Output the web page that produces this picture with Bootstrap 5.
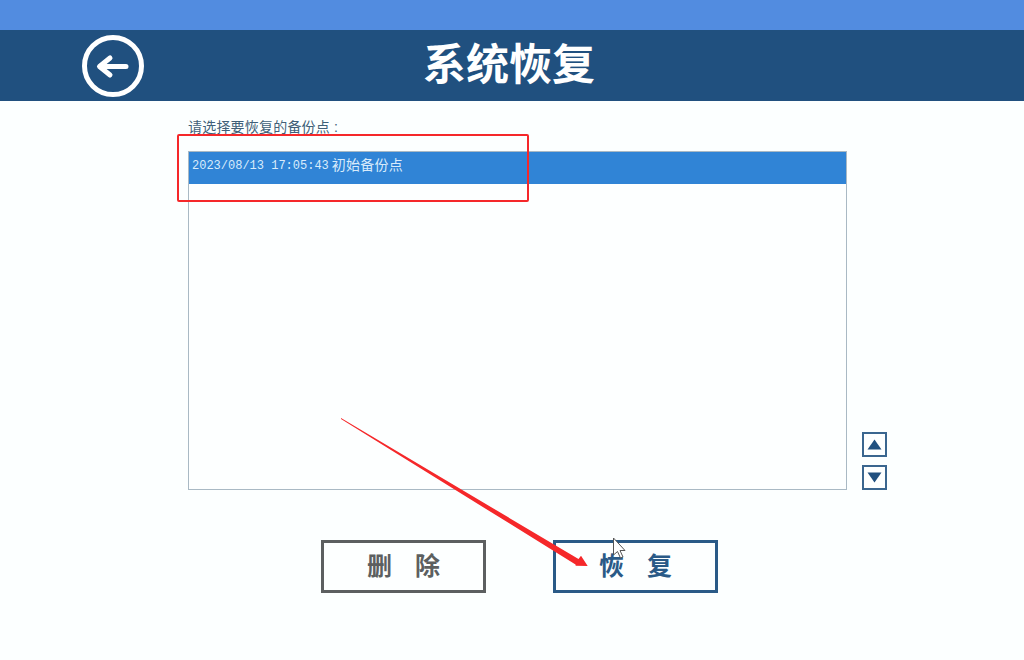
<!DOCTYPE html>
<html lang="zh-CN">

<head>
  <meta charset="UTF-8" />
  <meta name="viewport" content="width=device-width, initial-scale=1.0" />
  <title>系统恢复</title>
  <link href="https://cdn.jsdelivr.net/npm/bootstrap@5.3.0/dist/css/bootstrap.min.css" rel="stylesheet" />
  <script src="https://cdn.jsdelivr.net/npm/bootstrap@5.3.0/dist/js/bootstrap.bundle.min.js"></script>
  <style>
    body {
      background: #fcffff;
      height: 660px;
      overflow: hidden;
      position: relative;
      font-family: "Liberation Sans", "Noto Sans CJK SC", sans-serif;
    }

    .top-strip {
      height: 30px;
      background: #528ce0;
    }

    .title-bar {
      height: 71px;
      background: #20507f;
      padding-left: 82px;
    }

    .back-btn {
      width: 62px;
      height: 62px;
      padding: 0;
      border: 0;
      background: none;
      line-height: 0;
    }

    .title-text {
      margin: 0 0 0 279px;
      color: #fff;
      font-size: 43px;
      font-weight: 700;
      letter-spacing: 0;
      line-height: 71px;
    }

    .main-area {
      padding-left: 188px;
    }

    .pick-label {
      height: 50px;
      padding-top: 16px;
      font-size: 14px;
      line-height: 20px;
      letter-spacing: 0.2px;
      color: #3f5f78;
    }

    .backup-list {
      width: 659px;
      height: 339px;
      background: #fdffff;
      border: 1px solid #a9b9c4;
      border-radius: 0;
      display: block;
    }

    .backup-row {
      height: 32px;
      padding: 0 0 5px 3px;
      background: #3084d6;
      color: #d8ebfb;
      border: 0;
      font-size: 14px;
      letter-spacing: 0.2px;
    }

    .backup-time {
      font-family: "Liberation Mono", monospace;
      font-size: 12px;
      letter-spacing: 0;
      margin-right: 3px;
    }

    .scroll-btns {
      margin-left: 15px;
      gap: 8px;
    }

    .scroll-btn {
      width: 25px;
      height: 25px;
      padding: 0;
      background: #fdffff;
      border: 2px solid #3a668f;
      border-radius: 0;
      line-height: 0;
    }

    .action-row {
      margin-top: 50px;
      padding-left: 133px;
      gap: 67px;
    }

    .action-btn {
      width: 165px;
      height: 53px;
      padding: 0;
      background: #fdffff;
      border: 3px solid;
      border-radius: 0;
      font-size: 25px;
      font-weight: 700;
      line-height: 1;
    }

    .action-btn .gap-char {
      margin-left: 23px;
    }

    .action-gray {
      border-color: #5c5f60;
      color: #5c5f60;
    }

    .action-blue {
      border-color: #2a5a87;
      color: #2a5a87;
    }

    .mark-box {
      position: absolute;
      left: 177px;
      top: 134px;
      width: 352px;
      height: 68px;
      border: 2px solid #f5282a;
      border-radius: 2px;
    }

    .overlay-svg {
      position: absolute;
      left: 0;
      top: 0;
      pointer-events: none;
    }
  </style>
</head>

<body>
  <div class="top-strip"></div>
  <div class="title-bar d-flex align-items-center">
    <button class="back-btn" type="button" aria-label="返回">
      <svg width="62" height="62" viewBox="0 0 62 62">
        <circle cx="31" cy="31" r="28.5" fill="none" stroke="#fff" stroke-width="5" />
        <path d="M44 31.5H19M28 23 17.5 31.5 28 40" fill="none" stroke="#fff" stroke-width="5" stroke-linecap="round" stroke-linejoin="round" />
      </svg>
    </button>
    <h1 class="title-text">系统恢复</h1>
  </div>

  <div class="main-area">
    <div class="pick-label">请选择要恢复的备份点 :</div>
    <div class="d-flex align-items-end">
      <ul class="list-group backup-list">
        <li class="list-group-item backup-row d-flex align-items-center">
          <span class="backup-time">2023/08/13 17:05:43</span>初始备份点
        </li>
      </ul>
      <div class="scroll-btns d-flex flex-column">
        <button class="scroll-btn" type="button" aria-label="上移">
          <svg width="21" height="21" viewBox="0 0 21 21"><path d="M10.5 5.5 17.5 15.5H3.5z" fill="#20507f" /></svg>
        </button>
        <button class="scroll-btn" type="button" aria-label="下移">
          <svg width="21" height="21" viewBox="0 0 21 21"><path d="M3.5 5.5H17.5L10.5 15.5z" fill="#20507f" /></svg>
        </button>
      </div>
    </div>
    <div class="action-row d-flex">
      <button class="action-btn action-gray" type="button">删<span class="gap-char">除</span></button>
      <button class="action-btn action-blue" type="button">恢<span class="gap-char">复</span></button>
    </div>
  </div>

  <div class="mark-box"></div>
  <svg class="overlay-svg" width="1024" height="660" viewBox="0 0 1024 660">
    <polygon points="341,418 578.5,559 581,555.7 587.7,566 575.7,565.7 575.5,564.5 341,419" fill="#f5282a" />
    <path d="M613.5 538V555L617.5 551.5 620.5 558 623 557 620 550.5 625 550.5Z" fill="#fff" stroke="#555" stroke-width="1" />
  </svg>
</body>

</html>
